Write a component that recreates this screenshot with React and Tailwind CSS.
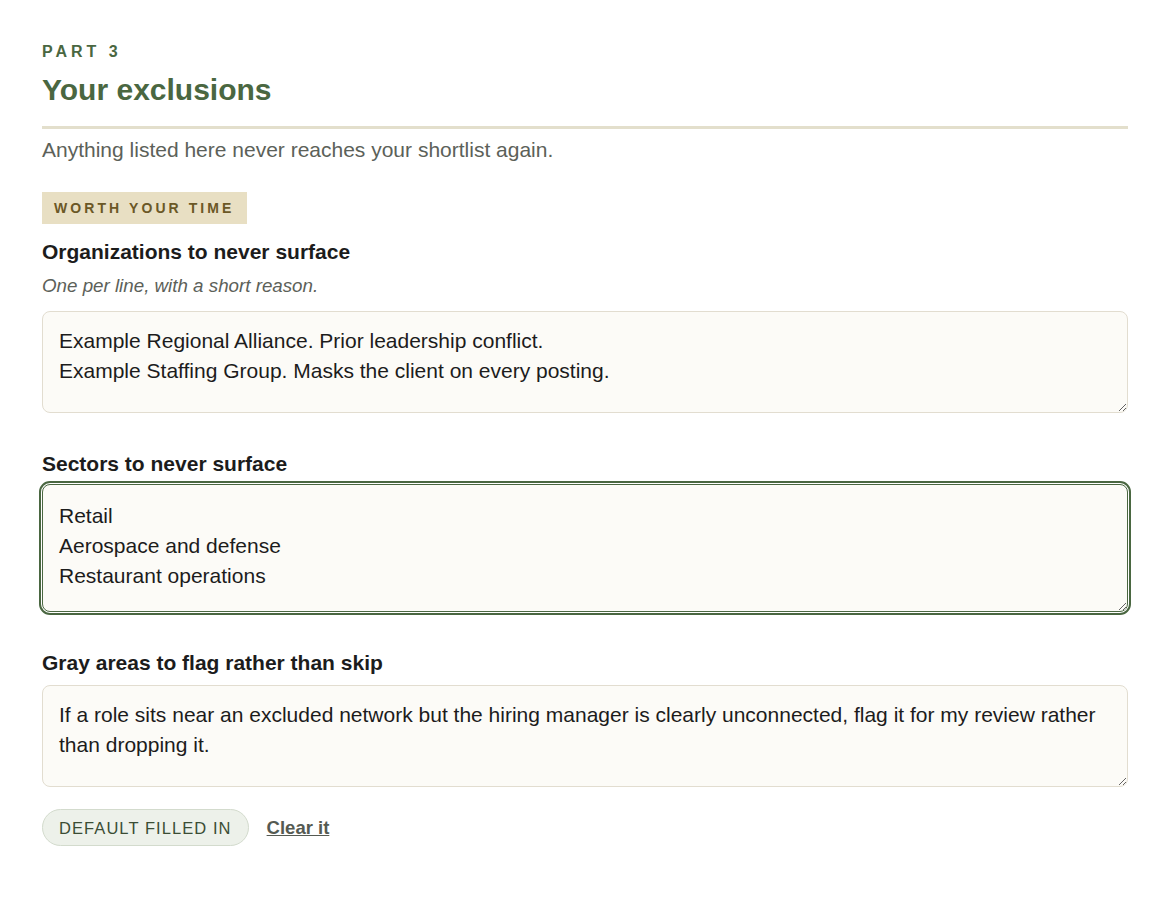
export default function App() {
  const font = { fontFamily: '"Liberation Sans", Arial, sans-serif' };
  const ta =
    "block w-full resize rounded-lg border border-[#e2ddd0] bg-[#fcfbf7] px-4 py-[14px] text-[21px] leading-[30px] text-[#1c1c1c] outline-none";
  return (
    <div className="min-h-[909px] bg-white px-[42px] pt-[40px]" style={font}>
      <div className="text-[16px] font-bold uppercase leading-[24px] tracking-[0.25em] text-[#4a6741]">
        Part 3
      </div>
      <h1 className="mt-2 border-b-[3px] border-[#e3dfcc] pb-[18px] text-[30px] font-bold leading-[36px] text-[#4a6741]">
        Your exclusions
      </h1>
      <p className="mt-[6px] text-[21px] leading-[30px] text-[#5c6159]">
        Anything listed here never reaches your shortlist again.
      </p>
      <div className="mt-[27px] inline-block bg-[#e8dfc3] px-3 py-[6px] text-[14px] font-bold uppercase leading-[20px] tracking-[0.22em] text-[#6b5826]">
        Worth your time
      </div>

      <div className="mt-[14px] text-[21px] font-bold leading-[28px] text-[#1c1c1c]">
        Organizations to never surface
      </div>
      <div className="mt-[7px] text-[18.75px] italic leading-[26px] text-[#5c6159]">
        One per line, with a short reason.
      </div>
      <textarea
        className={ta + " mt-3 h-[102px]"}
        defaultValue={
          "Example Regional Alliance. Prior leadership conflict.\nExample Staffing Group. Masks the client on every posting."
        }
        style={font}
      />

      <div className="mt-[37px] text-[21px] font-bold leading-[28px] text-[#1c1c1c]">
        Sectors to never surface
      </div>
      <textarea
        className="mt-[6px] block h-[128px] w-full resize rounded-lg border-[1.5px] border-[#4a6741] bg-[#fcfbf7] px-4 pt-[16px] pb-[12px] text-[21px] leading-[30px] text-[#1c1c1c] outline-[2.5px] outline-offset-1 outline-solid outline-[#4a6741]"
        defaultValue={"Retail\nAerospace and defense\nRestaurant operations"}
        style={font}
      />

      <div className="mt-[37px] text-[21px] font-bold leading-[28px] text-[#1c1c1c]">
        Gray areas to flag rather than skip
      </div>
      <textarea
        className={ta + " mt-2 h-[102px]"}
        defaultValue={
          "If a role sits near an excluded network but the hiring manager is clearly unconnected, flag it for my review rather than dropping it."
        }
        style={font}
      />

      <div className="mt-[22px] flex items-center gap-[18px]">
        <span className="inline-flex h-[37px] items-center rounded-full border border-[#d3dbcd] bg-[#edf1ea] px-4 text-[16.5px] uppercase leading-[24px] tracking-[0.065em] text-[#3b4d35]">
          Default filled in
        </span>
        <a
          href="#"
          className="text-[18.5px] font-bold leading-[26px] text-[#555a52] underline"
        >
          Clear it
        </a>
      </div>
    </div>
  );
}
